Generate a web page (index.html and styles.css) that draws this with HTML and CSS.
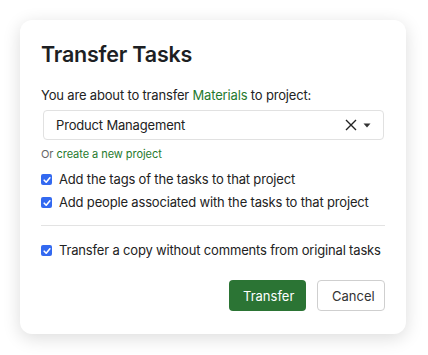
FILE: index.html
```html
<!DOCTYPE html>
<html lang="en">
<head>
  <meta charset="UTF-8">
  <meta name="viewport" content="width=device-width, initial-scale=1.0">
  <title>Transfer Tasks</title>
  <link rel="stylesheet" href="styles.css">
</head>
<body>
  <div class="modal">
    <h1 class="modal-title">Transfer Tasks</h1>

    <p class="intro">You are about to transfer <span class="accent">Materials</span> to project:</p>

    <div class="select">
      <span class="select-value">Product Management</span>
      <span class="select-icons">
        <svg class="clear-icon" width="12" height="12" viewBox="0 0 12 12">
          <path d="M1 1 L11 11 M11 1 L1 11" stroke="#222" stroke-width="1.4" fill="none"/>
        </svg>
        <svg class="caret-icon" width="8" height="5" viewBox="0 0 8 5">
          <path d="M0.5 0.5 L7.5 0.5 L4 4.5 Z" fill="#333"/>
        </svg>
      </span>
    </div>

    <div class="hint">Or <a href="#" class="accent">create a new project</a></div>

    <div class="checks">
      <label class="check">
        <span class="box"><svg width="10" height="10" viewBox="0 0 10 10"><path d="M2.2 5.2 L4.2 7.2 L7.9 2.8" stroke="#fff" stroke-width="1.6" fill="none" stroke-linecap="round" stroke-linejoin="round"/></svg></span>
        Add the tags of the tasks to that project
      </label>
      <label class="check">
        <span class="box"><svg width="10" height="10" viewBox="0 0 10 10"><path d="M2.2 5.2 L4.2 7.2 L7.9 2.8" stroke="#fff" stroke-width="1.6" fill="none" stroke-linecap="round" stroke-linejoin="round"/></svg></span>
        Add people associated with the tasks to that project
      </label>
    </div>

    <hr class="divider">

    <label class="check">
      <span class="box"><svg width="10" height="10" viewBox="0 0 10 10"><path d="M2.2 5.2 L4.2 7.2 L7.9 2.8" stroke="#fff" stroke-width="1.6" fill="none" stroke-linecap="round" stroke-linejoin="round"/></svg></span>
      Transfer a copy without comments from original tasks
    </label>

    <div class="actions">
      <button class="btn btn-primary">Transfer</button>
      <button class="btn btn-default">Cancel</button>
    </div>
  </div>
</body>
</html>
```

FILE: styles.css
```css
body { margin: 0; padding: 20px; background: #fff; font-family: Inter, "Liberation Sans", sans-serif; color: #222; letter-spacing: -0.17px; }
.modal {
  width: 386px;
  height: 314px;
  box-sizing: border-box;
  padding: 20px 21px 0 21px;
  background: #fff;
  border-radius: 12px;
  box-shadow: 0 4px 18px rgba(0, 0, 0, 0.14);
}
.modal-title { margin: 0; font-size: 21.5px; font-weight: 600; color: #1d1f23; line-height: 28px; letter-spacing: -0.2px; }
.intro { margin: 18px 0 0 0; font-size: 13px; line-height: 18px; }
.accent { color: #1f7a2e; text-decoration: none; }
.select {
  display: flex;
  align-items: center;
  justify-content: space-between;
  margin: 6px 1px 0 2px;
  height: 28px;
  padding: 0 12px;
  border: 1px solid #e1e1e1;
  border-radius: 4px;
  font-size: 13px;
}
.select-icons { display: flex; align-items: center; gap: 6px; }
.hint { margin-top: 7px; font-size: 11px; color: #666; letter-spacing: -0.05px; }
.checks { display: flex; flex-direction: column; gap: 6px; margin-top: 10px; }
.check { display: flex; align-items: center; gap: 7px; font-size: 13px; line-height: 17px; white-space: nowrap; }
.box {
  display: flex;
  align-items: center;
  justify-content: center;
  width: 11px;
  height: 11px;
  border-radius: 2px;
  background: #3369f0;
}
.divider { margin: 14px 0 16px 0; border: none; border-top: 1px solid #e3e3e3; }
.actions { display: flex; justify-content: flex-end; gap: 11px; margin-top: 21px; }
.btn { height: 31px; padding: 0 14px; border-radius: 4px; font-family: inherit; font-size: 13px; letter-spacing: 0; cursor: pointer; }
.btn-primary { width: 77px; background: #2b7434; color: #fff; border: none; }
.btn-default { width: 68px; background: #fff; color: #333; border: 1px solid #cfcfcf; }
```
